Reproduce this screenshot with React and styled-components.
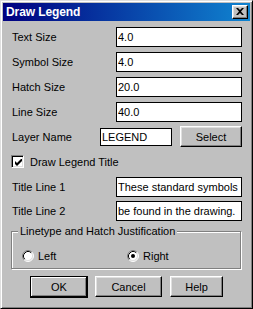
import React from 'react';
import styled, { createGlobalStyle } from 'styled-components';

const GlobalStyle = createGlobalStyle`
  html, body {
    margin: 0;
    padding: 0;
    background: #c0c0c0;
  }
  body {
    font-family: 'Liberation Sans', Arial, sans-serif;
    font-size: 11px;
    color: #000;
  }
`;

const DrawLegend = () => {
  return (
    <Window>
      <TitleBar>
        <TitleText>Draw Legend</TitleText>
        <CloseButton aria-label="Close">
          <svg width="8" height="7" viewBox="0 0 8 7">
            <path d="M0 0h2l2 2 2-2h2L5 3.5 8 7H6L4 5 2 7H0l3-3.5z" fill="#000" />
          </svg>
        </CloseButton>
      </TitleBar>

      <Body>
        <FieldRow>
          <Label>Text Size</Label>
          <TextField defaultValue="4.0" />
        </FieldRow>
        <FieldRow>
          <Label>Symbol Size</Label>
          <TextField defaultValue="4.0" />
        </FieldRow>
        <FieldRow>
          <Label>Hatch Size</Label>
          <TextField defaultValue="20.0" />
        </FieldRow>
        <FieldRow>
          <Label>Line Size</Label>
          <TextField defaultValue="40.0" />
        </FieldRow>

        <LayerRow>
          <Label>Layer Name</Label>
          <TextField defaultValue="LEGEND" $h={18} />
          <PushButton $w={62}>Select</PushButton>
        </LayerRow>

        <CheckRow>
          <CheckBox>
            <svg width="7" height="7" viewBox="0 0 7 7">
              <path d="M0 2v3l2 2 5-5V-1L2 4z" fill="#000" />
            </svg>
          </CheckBox>
          <span>Draw Legend Title</span>
        </CheckRow>

        <FieldRow $mt={9}>
          <Label>Title Line 1</Label>
          <TextField defaultValue="These standard symbols" />
        </FieldRow>
        <FieldRow $mt={4}>
          <Label>Title Line 2</Label>
          <TextField defaultValue="be found in the drawing." />
        </FieldRow>

        <GroupBox>
          <GroupLegend>Linetype and Hatch Justification</GroupLegend>
          <RadioGrid>
            <RadioItem>
              <Radio />
              <span>Left</span>
            </RadioItem>
            <RadioItem>
              <Radio checked />
              <span>Right</span>
            </RadioItem>
          </RadioGrid>
        </GroupBox>

        <ButtonRow>
          <PushButton $w={58} $default>OK</PushButton>
          <PushButton $w={67}>Cancel</PushButton>
          <PushButton $w={53}>Help</PushButton>
        </ButtonRow>
      </Body>
    </Window>
  );
};

const Radio = ({ checked }) => (
  <RadioIcon width="12" height="12" viewBox="0 0 12 12">
    <circle cx="6" cy="6" r="5" fill="#fff" />
    <path d="M2.11 9.89A5.5 5.5 0 0 1 9.89 2.11" stroke="#808080" fill="none" />
    <path d="M9.89 2.11A5.5 5.5 0 0 1 2.11 9.89" stroke="#fff" fill="none" />
    <path d="M2.82 9.18A4.5 4.5 0 0 1 9.18 2.82" stroke="#000" fill="none" />
    <path d="M9.18 2.82A4.5 4.5 0 0 1 2.82 9.18" stroke="#dfdfdf" fill="none" />
    {checked && <circle cx="6" cy="6" r="2" fill="#000" />}
  </RadioIcon>
);

const App = () => (
  <>
    <GlobalStyle />
    <DrawLegend />
  </>
);

// Styled Components
const Window = styled.div`
  width: 253px;
  height: 309px;
  box-sizing: border-box;
  background: #c0c0c0;
  border: 1px solid;
  border-color: #dfdfdf #000 #000 #dfdfdf;
  box-shadow: inset 1px 1px 0 #fff, inset -1px -1px 0 #808080;
  padding: 2px;
  display: flex;
  flex-direction: column;
`;

const TitleBar = styled.div`
  height: 18px;
  display: flex;
  align-items: center;
  justify-content: space-between;
  padding: 0 2px 0 3px;
  background: linear-gradient(90deg, #000080 0%, #1084d0 100%);
`;

const TitleText = styled.span`
  color: #fff;
  font-weight: bold;
  font-size: 12px;
  letter-spacing: -0.1px;
`;

const CloseButton = styled.div`
  width: 16px;
  height: 14px;
  box-sizing: border-box;
  background: #c0c0c0;
  border: 1px solid;
  border-color: #fff #000 #000 #fff;
  box-shadow: inset -1px -1px 0 #808080, inset 1px 1px 0 #dfdfdf;
  display: flex;
  align-items: center;
  justify-content: center;
  padding: 0 1px 1px 0;
`;

const Body = styled.div`
  display: flex;
  flex-direction: column;
  padding: 6px 8px 0 8px;
`;

const FieldRow = styled.div`
  display: grid;
  grid-template-columns: 105px 1fr;
  align-items: center;
  height: 20px;
  margin-top: ${p => (p.$mt !== undefined ? p.$mt : 5)}px;

  &:first-child {
    margin-top: 0;
  }
`;

const Label = styled.span`
  padding-left: 1px;
  white-space: nowrap;
`;

const TextField = styled.input`
  box-sizing: border-box;
  width: 100%;
  height: ${p => p.$h || 20}px;
  margin: 0;
  border: 1px solid #000;
  background: #fff;
  padding: 0 0 0 1px;
  font-family: 'Liberation Sans', Arial, sans-serif;
  font-size: 11px;
  color: #000;
  outline: none;
`;

const LayerRow = styled.div`
  display: grid;
  grid-template-columns: 89px 72px 1fr;
  align-items: center;
  height: 21px;
  margin-top: 4px;

  & > button {
    margin-left: 8px;
  }
`;

const PushButton = styled.button`
  box-sizing: border-box;
  width: ${p => p.$w}px;
  height: ${p => (p.$default ? 22 : 21)}px;
  margin: 0;
  padding: 0;
  background: #c0c0c0;
  font-family: 'Liberation Sans', Arial, sans-serif;
  font-size: 11px;
  color: #000;
  border: 1px solid;
  border-color: ${p => (p.$default ? '#000' : '#fff #000 #000 #fff')};
  box-shadow: ${p =>
    p.$default
      ? 'inset -1px -1px 0 #000, inset 1px 1px 0 #fff, inset -2px -2px 0 #808080'
      : 'inset -1px -1px 0 #808080, inset 1px 1px 0 #dfdfdf'};
`;

const CheckRow = styled.label`
  display: flex;
  align-items: center;
  gap: 6px;
  height: 13px;
  margin-top: 8px;
`;

const CheckBox = styled.span`
  box-sizing: border-box;
  width: 13px;
  height: 13px;
  background: #fff;
  border: 1px solid;
  border-color: #808080 #fff #fff #808080;
  box-shadow: inset 1px 1px 0 #000, inset -1px -1px 0 #dfdfdf;
  display: flex;
  align-items: center;
  justify-content: center;
  padding: 1px 0 0 1px;
`;

const GroupBox = styled.div`
  position: relative;
  box-sizing: border-box;
  height: 38px;
  margin: 10px 1px 0 0;
  border: 1px solid #808080;
  box-shadow: 1px 1px 0 #fff, inset 1px 1px 0 #fff;
  padding: 18px 0 0 10px;
`;

const GroupLegend = styled.span`
  position: absolute;
  top: -7px;
  left: 6px;
  padding: 0 2px;
  background: #c0c0c0;
  line-height: 13px;
  white-space: nowrap;
`;

const RadioGrid = styled.div`
  display: grid;
  grid-template-columns: 105px 1fr;
  align-items: center;
`;

const RadioItem = styled.label`
  display: flex;
  align-items: center;
  gap: 4px;
  height: 12px;
`;

const RadioIcon = styled.svg`
  display: block;
  flex-shrink: 0;
`;

const ButtonRow = styled.div`
  display: flex;
  align-items: flex-start;
  gap: 7px;
  margin-top: 7px;
  padding-left: 19px;

  & > :last-child {
    margin-left: 1px;
  }
`;

export default App;
